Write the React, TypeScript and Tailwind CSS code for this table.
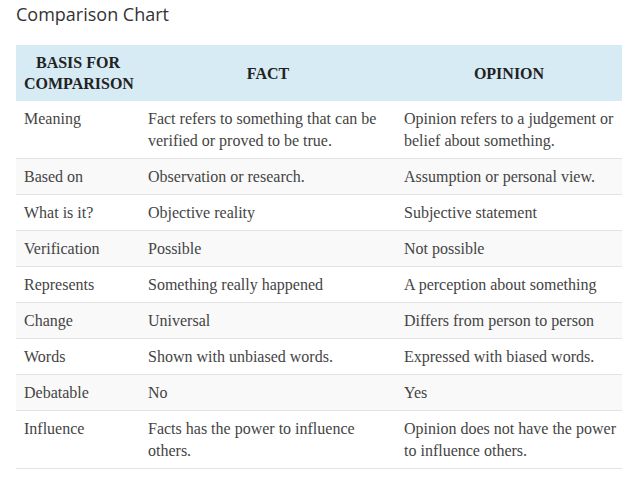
const rows: [string, string, string][] = [
  ['Meaning', 'Fact refers to something that can be verified or proved to be true.', 'Opinion refers to a judgement or belief about something.'],
  ['Based on', 'Observation or research.', 'Assumption or personal view.'],
  ['What is it?', 'Objective reality', 'Subjective statement'],
  ['Verification', 'Possible', 'Not possible'],
  ['Represents', 'Something really happened', 'A perception about something'],
  ['Change', 'Universal', 'Differs from person to person'],
  ['Words', 'Shown with unbiased words.', 'Expressed with biased words.'],
  ['Debatable', 'No', 'Yes'],
  ['Influence', 'Facts has the power to influence others.', 'Opinion does not have the power to influence others.'],
];

export default function App() {
  return (
    <div className="w-[640px] h-[482px] bg-white px-4 pt-[1px]">
      <h2 className="text-[18px] leading-[26px] text-[#333] font-['Open_Sans',sans-serif] font-normal">
        Comparison Chart
      </h2>

      <table className="mt-[18px] w-[606px] table-fixed border-collapse font-['Liberation_Serif',serif] text-[16px]">
        <colgroup>
          <col className="w-[124px]" />
          <col className="w-[256px]" />
          <col className="w-[226px]" />
        </colgroup>
        <thead>
          <tr className="bg-[#d7ebf5] text-[#222] font-bold leading-[21px]">
            <th className="py-[7px] px-2 text-center">BASIS FOR<br />COMPARISON</th>
            <th className="py-[7px] px-2 text-center">FACT</th>
            <th className="py-[7px] px-2 text-center">OPINION</th>
          </tr>
        </thead>
        <tbody>
          {rows.map((r, i) => (
            <tr
              key={r[0]}
              className={`border-b border-[#e3e3e3] text-[#444] leading-[22px] align-top ${i % 2 === 1 ? 'bg-[#f9f9f9]' : 'bg-white'}`}
            >
              {r.map((c, j) => (
                <td key={j} className="pt-[7px] pb-[6px] pl-2 pr-[2px]">
                  {c}
                </td>
              ))}
            </tr>
          ))}
        </tbody>
      </table>
    </div>
  );
}
